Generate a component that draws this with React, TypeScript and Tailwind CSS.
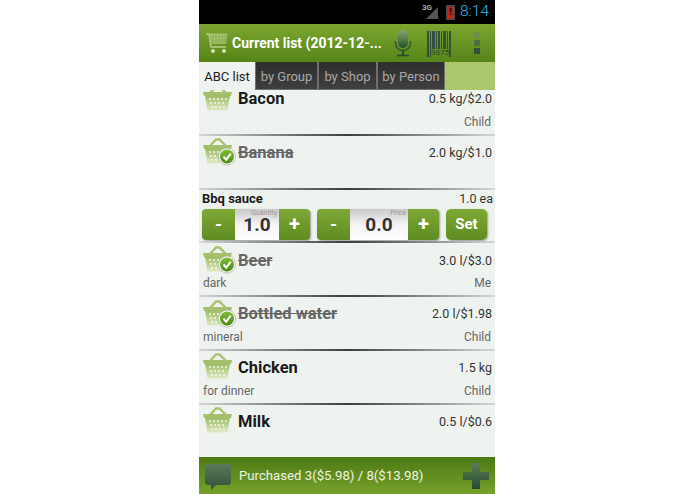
import { useId } from "react";

interface Item {
  name: string;
  amount: string;
  note?: string;
  person?: string;
  done?: boolean;
}

const topItems: Item[] = [
  { name: "Bacon", amount: "0.5 kg/$2.0", person: "Child" },
  { name: "Banana", amount: "2.0 kg/$1.0", done: true },
];

const bottomItems: Item[] = [
  { name: "Beer", amount: "3.0 l/$3.0", note: "dark", person: "Me", done: true },
  { name: "Bottled water", amount: "2.0 l/$1.98", note: "mineral", person: "Child", done: true },
  { name: "Chicken", amount: "1.5 kg", note: "for dinner", person: "Child" },
  { name: "Milk", amount: "0.5 l/$0.6" },
];

function Basket({ done }: { done?: boolean }) {
  const id = useId();
  const badge = id + "b";
  return (
    <svg width="36" height="30" viewBox="0 0 36 30" className="shrink-0">
      <defs>
        <linearGradient id={id} x1="0" y1="0" x2="0" y2="1">
          <stop offset="0" stopColor="#9dba62" />
          <stop offset="1" stopColor="#e0eac6" />
        </linearGradient>
        <linearGradient id={badge} x1="0" y1="0" x2="0" y2="1">
          <stop offset="0" stopColor="#82bd35" />
          <stop offset="1" stopColor="#4c8a16" />
        </linearGradient>
      </defs>
      <path d="M8 8 L14 1.5 H17.5 L24 8" fill="none" stroke="#a9c274" strokeWidth="2.4" />
      <path d="M1 7 H30 L29 11 H2 Z" fill="#a5bf6c" />
      <path d="M3 10.5 H28 L25.5 25.5 H5.5 Z" fill={`url(#${id})`} />
      <g fill="#f4f7ea">
        <circle cx="8" cy="14" r="1" />
        <circle cx="12" cy="14" r="1" />
        <circle cx="16" cy="14" r="1" />
        <circle cx="20" cy="14" r="1" />
        <circle cx="24" cy="14" r="1" />
        <circle cx="9" cy="18" r="1" />
        <circle cx="13" cy="18" r="1" />
        <circle cx="17" cy="18" r="1" />
        <circle cx="21" cy="18" r="1" />
        <circle cx="10" cy="22" r="1" />
        <circle cx="14" cy="22" r="1" />
        <circle cx="18" cy="22" r="1" />
        <circle cx="22" cy="22" r="1" />
      </g>
      {done && (
        <g>
          <circle cx="25" cy="18.5" r="8.6" fill="#f4f6f0" stroke="#9aa58c" strokeWidth="0.6" />
          <circle cx="25" cy="18.5" r="7" fill={`url(#${badge})`} />
          <path d="M21.5 18.5 L24.2 21.6 L28.8 15.6" fill="none" stroke="#fff" strokeWidth="2" />
        </g>
      )}
    </svg>
  );
}

function Divider() {
  return <div className="h-[2px] shrink-0 bg-linear-to-r from-[#d5d9d5] via-[#3c3f3c] to-[#d5d9d5]" />;
}

function Row({ item }: { item: Item }) {
  return (
    <div className="h-[53.8px] flex flex-col shrink-0">
      <div className="flex items-center h-[35px] pl-[3px] pr-[3px]">
        <Basket done={item.done} />
        <span
          className={
            item.done
              ? "text-[16.5px] font-bold line-through text-[#666]"
              : "text-[16.5px] font-bold text-[#1a1a1a]"
          }
        >
          {item.name}
        </span>
        <span className="ml-auto text-[12.5px] text-[#333]">{item.amount}</span>
      </div>
      <div className="flex justify-between items-center h-[16px] pl-[4px] pr-[4px] mt-[-3px] text-[12px] text-[#666]">
        <span>{item.note}</span>
        <span>{item.person}</span>
      </div>
      <div className="flex-1" />
      <Divider />
    </div>
  );
}

function Stepper({ label, value, width }: { label: string; value: string; width: string }) {
  return (
    <div className={`flex h-[31px] rounded-[4px] overflow-hidden shadow-[1px_1px_2px_#9a9a9a] ${width}`}>
      <div className="w-[33px] shrink-0 flex items-center justify-center bg-linear-to-b from-[#7fa836] to-[#5e8c20] text-white font-bold text-[18px]">
        -
      </div>
      <div className="relative flex-1 flex items-center justify-center bg-linear-to-b from-[#c9c9c9] via-[#f4f4f4] to-[#ffffff] text-[#333] font-bold text-[19px]">
        <span className="mt-[1px] leading-[16px]">{value}</span>
        <span className="absolute right-[2px] top-0 text-[7px] text-[#999] font-normal leading-[8px]">{label}</span>
      </div>
      <div className="w-[31px] shrink-0 flex items-center justify-center bg-linear-to-b from-[#7fa836] to-[#5e8c20] text-white font-bold text-[20px]">
        +
      </div>
    </div>
  );
}

function CartIcon() {
  return (
    <svg width="24" height="24" viewBox="0 0 24 24" className="shrink-0">
      <path d="M1 3 H4 L6 16 H21" fill="none" stroke="#b9d08c" strokeWidth="1.4" />
      <path d="M5 2.5 H22.5 L21 13 H6.5 Z" fill="#a9c47a" />
      <g stroke="#7fa53a" strokeWidth="0.6">
        <path d="M5 6 H22 M5.5 9 H22 M6 11.5 H21" />
        <path d="M8 3 V13 M11 3 V13 M14 3 V13 M17 3 V13 M20 3 V13" />
      </g>
      <circle cx="8" cy="20" r="2" fill="#d5e3b5" />
      <circle cx="19" cy="20" r="2" fill="#d5e3b5" />
    </svg>
  );
}

function MicIcon() {
  return (
    <svg width="18" height="28" viewBox="0 0 18 28" className="shrink-0">
      <defs>
        <linearGradient id="mic" x1="0" y1="0" x2="0" y2="1">
          <stop offset="0" stopColor="#8aa56c" />
          <stop offset="1" stopColor="#24502f" />
        </linearGradient>
      </defs>
      <rect x="4" y="1" width="10" height="18" rx="5" fill="url(#mic)" />
      <path d="M1.5 12 V14 C1.5 24 16.5 24 16.5 14 V12" fill="none" stroke="#2f5c36" strokeWidth="1.6" />
      <path d="M9 21 V26" stroke="#264f2f" strokeWidth="2" />
      <path d="M3 26.5 H15" stroke="#264f2f" strokeWidth="1.6" />
    </svg>
  );
}

function BarcodeIcon() {
  const bars = [
    [0, 2, 26],
    [3, 1, 26],
    [5, 3, 18],
    [9, 1, 18],
    [11, 2, 18],
    [14, 1, 18],
    [16, 3, 18],
    [20, 1, 18],
    [22, 2, 26],
  ];
  return (
    <div className="relative w-[26px] h-[27px] shrink-0">
      <svg width="26" height="27" viewBox="0 0 26 27">
        {bars.map(([x, w, h]) => (
          <rect key={x} x={x} y="1" width={w} height={h} fill="#33503a" />
        ))}
      </svg>
      <span className="absolute left-[4px] bottom-[0px] text-[8px] leading-[8px] text-[#2f4a2f]">9875</span>
    </div>
  );
}

export default function App() {
  return (
    <div className="w-[296px] h-[494px] ml-[199px] flex flex-col font-['Roboto',sans-serif] overflow-hidden">
      <div className="h-[24px] shrink-0 bg-black flex items-center justify-end pr-[6px]">
        <div className="relative w-[16px] h-[16px]">
          <span className="absolute left-[-1px] top-[-1px] text-[8px] font-bold text-[#aaa] leading-[9px]">3G</span>
          <svg width="16" height="16" viewBox="0 0 16 16" className="absolute inset-0">
            <path d="M15 3 V15 H3 Z" fill="#555" />
          </svg>
        </div>
        <div className="w-[9px] h-[15px] bg-[#4a4a4a] rounded-[1px] flex items-end justify-center ml-[7px] pb-[1px]">
          <div className="w-[7px] h-[12px] bg-[#b8261e] flex items-center justify-center text-[9px] font-bold text-black leading-none">!</div>
        </div>
        <span className="text-[#33b5e5] text-[15.5px] font-light ml-[5px]">8:14</span>
      </div>

      <div className="h-[38px] shrink-0 flex items-center bg-linear-to-b from-[#7ba62f] to-[#578418] pl-[6px]">
        <CartIcon />
        <span className="ml-[3px] w-[157px] text-white font-bold text-[14px] whitespace-nowrap">
          Current list (2012-12-...
        </span>
        <div className="ml-[5px]">
          <MicIcon />
        </div>
        <div className="ml-[15px]">
          <BarcodeIcon />
        </div>
        <div className="ml-[21px] flex flex-col gap-[2px]">
          <div className="w-[6px] h-[6px] bg-[#6f8f4a]" />
          <div className="w-[6px] h-[6px] bg-[#4c7040]" />
          <div className="w-[6px] h-[6px] bg-[#2f5238]" />
        </div>
      </div>

      <div className="h-[28px] shrink-0 flex bg-[#abc86c] relative z-10">
        <div className="w-[56px] pt-[2px] bg-[#eff3f0] flex items-center justify-center text-[13px] text-[#222]">ABC list</div>
        {["by Group", "by Shop", "by Person"].map((t, i) => (
          <div
            key={t}
            className={
              (i === 0 ? "w-[63px]" : i === 1 ? "w-[59px]" : "w-[68px]") +
              " pt-[2px] flex items-center justify-center text-[13px] text-[#a8a8a8] bg-linear-to-b from-[#2e2e2e] to-[#3f3f3f] border border-[#6f6f6f] border-t-0"
            }
          >
            {t}
          </div>
        ))}
      </div>

      <div className="flex-1 min-h-0 overflow-hidden bg-[#eff3f0]">
        <div className="-mt-[8px]">
          {topItems.map((item) => (
            <Row key={item.name} item={item} />
          ))}
          <div className="h-[53.8px] flex flex-col px-[3px]">
            <div className="flex justify-between items-center h-[18px] pt-[1px]">
              <span className="text-[13px] font-bold text-[#1a1a1a]">Bbq sauce</span>
              <span className="text-[12.5px] text-[#333] mr-[-1px]">1.0 ea</span>
            </div>
            <div className="flex mt-[1px] gap-[7px]">
              <Stepper label="Quantity" value="1.0" width="w-[108px]" />
              <Stepper label="Price" value="0.0" width="w-[122px]" />
              <div className="w-[41px] h-[31px] rounded-[5px] flex items-center justify-center bg-linear-to-b from-[#7fa836] to-[#5e8c20] text-white font-bold text-[15px] shadow-[1px_1px_2px_#9a9a9a]">
                Set
              </div>
            </div>
            <div className="flex-1" />
            <div className="-mx-[3px]">
              <Divider />
            </div>
          </div>
          {bottomItems.map((item) => (
            <Row key={item.name} item={item} />
          ))}
        </div>
      </div>

      <div className="h-[37px] shrink-0 flex items-center bg-linear-to-b from-[#4d7914] to-[#76a22c] pl-[5px] pr-[6px]">
        <svg width="28" height="28" viewBox="0 0 28 28" className="shrink-0 mt-[2px]">
          <defs>
            <linearGradient id="bubble" x1="0" y1="0" x2="0" y2="1">
              <stop offset="0" stopColor="#5a7a58" />
              <stop offset="1" stopColor="#2f5238" />
            </linearGradient>
          </defs>
          <path d="M4 1 H24 Q27 1 27 4 V19 Q27 22 24 22 H12 L7 27 V22 H4 Q1 22 1 19 V4 Q1 1 4 1 Z" fill="url(#bubble)" />
        </svg>
        <span className="ml-[7px] text-[#eef3e0] text-[13.2px] whitespace-nowrap">Purchased 3($5.98) / 8($13.98)</span>
        <svg width="26" height="26" viewBox="0 0 26 26" className="ml-auto shrink-0">
          <defs>
            <linearGradient id="plus" x1="0" y1="0" x2="0" y2="1">
              <stop offset="0" stopColor="#5a7d50" />
              <stop offset="1" stopColor="#264a34" />
            </linearGradient>
          </defs>
          <path d="M9 0 H17 V9 H26 V17 H17 V26 H9 V17 H0 V9 H9 Z" fill="url(#plus)" />
        </svg>
      </div>
    </div>
  );
}
